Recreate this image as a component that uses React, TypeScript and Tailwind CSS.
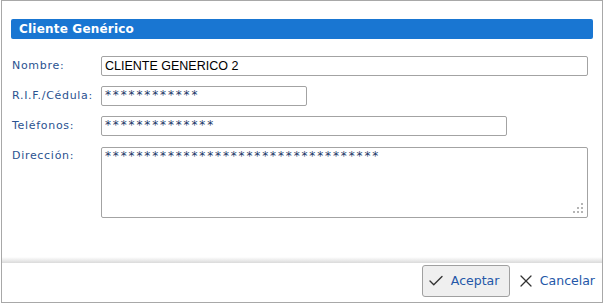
import { Check, X } from 'lucide-react';

const label = "w-[89px] shrink-0 text-[11px] tracking-[0.7px] text-[#2a5290] [font-family:'DejaVu_Sans',sans-serif]";
const input = "h-[20px] rounded-[2px] border border-[#a3a3a3] bg-white px-[3px] flex items-center";
const stars = "text-[12px] tracking-[1.86px] text-[#1b3768] [font-family:'DejaVu_Sans',sans-serif] leading-none";

function Row({ name, width, children }: { name: string; width: string; children: React.ReactNode }) {
  return (
    <div className="flex items-center">
      <span className={label}>{name}</span>
      <div className={`${input} ${width}`}>{children}</div>
    </div>
  );
}

function Grip() {
  const dots = [[8, 0], [4, 4], [8, 4], [0, 8], [4, 8], [8, 8]];
  return (
    <svg width="11" height="11" viewBox="0 0 11 11" className="absolute bottom-[3px] right-[3px]">
      {dots.map(([x, y]) => (
        <rect key={`${x}-${y}`} x={x} y={y} width="2" height="2" fill="#b5b5b5" />
      ))}
    </svg>
  );
}

export default function App() {
  return (
    <div className="h-[304px] w-[604px] bg-white">
      <div className="ml-px flex h-[303px] w-[602px] flex-col border border-[#a8a8a8] bg-white">
        <div className="flex-1 px-[9px] pt-[18px]">
          <div className="flex h-[20px] items-center rounded-[2px] bg-[#1976d2] pl-[8px] text-[12px] font-bold tracking-[0.2px] text-white [font-family:'DejaVu_Sans',sans-serif]">
            Cliente Genérico
          </div>
          <div className="flex flex-col pl-px pr-[4px] pt-[17px]">
            <Row name="Nombre:" width="w-[487px]">
              <span className="text-[12.5px] text-black [font-family:'Liberation_Sans',sans-serif]">CLIENTE GENERICO 2</span>
            </Row>
            <div className="mt-[10px]">
              <Row name="R.I.F./Cédula:" width="w-[206px]">
                <span className={`${stars} -mt-[3px]`}>{'*'.repeat(12)}</span>
              </Row>
            </div>
            <div className="mt-[10px]">
              <Row name="Teléfonos:" width="w-[406px]">
                <span className={`${stars} -mt-[3px]`}>{'*'.repeat(14)}</span>
              </Row>
            </div>
            <div className="mt-[11px] flex items-start">
              <span className={`${label} pt-[1px]`}>Dirección:</span>
              <div className="relative h-[71px] w-[487px] rounded-[2px] border border-[#a3a3a3] bg-white px-[3px] leading-none">
                <span className={`${stars} block mt-[2px]`}>{'*'.repeat(35)}</span>
                <Grip />
              </div>
            </div>
          </div>
        </div>
        <div className="h-[6px] bg-gradient-to-b from-white to-[#dadada]" />
        <div className="flex h-[39px] items-start justify-end pr-[7px] pt-[2px] [font-family:'DejaVu_Sans',sans-serif]">
          <button className="flex h-[32px] w-[88px] items-center gap-[6px] rounded-[3px] border border-[#a0a0a0] bg-[#efefef] pl-[4px] text-[12.5px] text-[#2457a8]">
            <Check className="h-[18px] w-[18px] text-[#333]" strokeWidth={1.8} />
            Aceptar
          </button>
          <button className="ml-[6px] flex h-[32px] items-center gap-[4px] text-[12.5px] text-[#2457a8]">
            <X className="h-[20px] w-[20px] text-[#333]" strokeWidth={1.5} />
            Cancelar
          </button>
        </div>
      </div>
    </div>
  );
}
